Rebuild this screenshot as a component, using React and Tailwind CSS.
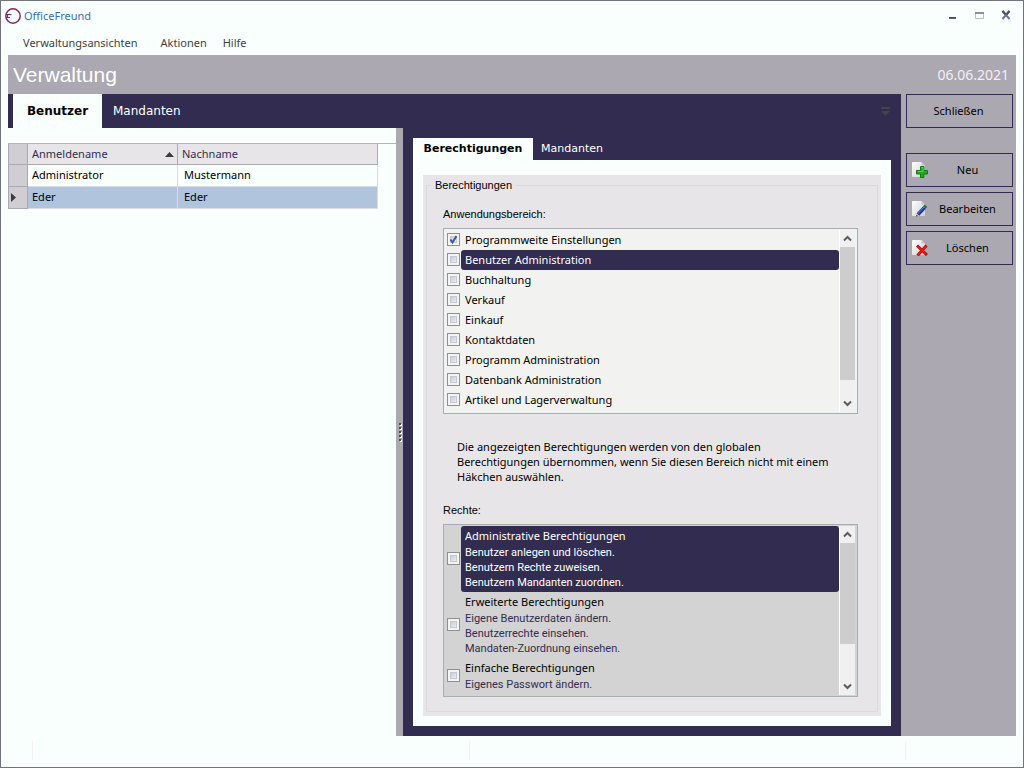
import { useState } from 'react'
import clsx from 'clsx'

const USERS = [
  { login: 'Administrator', lastName: 'Mustermann' },
  { login: 'Eder', lastName: 'Eder' },
]

const AREAS = [
  'Programmweite Einstellungen',
  'Benutzer Administration',
  'Buchhaltung',
  'Verkauf',
  'Einkauf',
  'Kontaktdaten',
  'Programm Administration',
  'Datenbank Administration',
  'Artikel und Lagerverwaltung',
]

const RIGHTS = [
  {
    title: 'Administrative Berechtigungen',
    lines: ['Benutzer anlegen und löschen.', 'Benutzern Rechte zuweisen.', 'Benutzern Mandanten zuordnen.'],
  },
  {
    title: 'Erweiterte Berechtigungen',
    lines: ['Eigene Benutzerdaten ändern.', 'Benutzerrechte einsehen.', 'Mandaten-Zuordnung einsehen.'],
  },
  { title: 'Einfache Berechtigungen', lines: ['Eigenes Passwort ändern.'] },
]

function Logo() {
  return (
    <svg width="16" height="16" viewBox="0 0 16 16" fill="none" stroke="#84286b" aria-hidden="true">
      <circle cx="8" cy="8" r="7.2" strokeWidth="1.5" />
      <path d="M1 6.5H6.5M1 9.5H5M2.5 6V10" strokeWidth="1.2" />
    </svg>
  )
}

function TitleBar() {
  return (
    <header className="flex h-[30px] items-center pl-1 pr-[9px]">
      <Logo />
      <h1 className="ml-[3px] flex-1 text-[11px] text-[#3a6fb5]">OfficeFreund</h1>
      <div className="flex items-center gap-[11px]">
        <button type="button" aria-label="Minimieren" className="h-4 w-4">
          <svg width="16" height="16" viewBox="0 0 16 16">
            <path d="M5 9h7v2H5z" fill="#5b6478" />
            <path d="M5 9h7v1H5z" fill="#474d5c" />
          </svg>
        </button>
        <button type="button" aria-label="Maximieren" className="h-4 w-4">
          <svg width="16" height="16" viewBox="0 0 16 16">
            <path d="M4.5 4.5h8v6h-8z" fill="none" stroke="#b9bfcc" />
            <path d="M4 4h9v2H4z" fill="#8d8f96" />
          </svg>
        </button>
        <button type="button" aria-label="Schließen" className="h-4 w-4">
          <svg width="16" height="16" viewBox="0 0 16 16" fill="none" strokeWidth="2">
            <path d="M4.5 3l7 8M11.5 3l-7 8" stroke="#6b7690" />
            <path d="M4.5 3l3 3.5M11.5 3l-3 3.5" stroke="#4b5161" />
          </svg>
        </button>
      </div>
    </header>
  )
}

function MenuBar() {
  return (
    <nav className="flex h-6 items-center pl-[22px] text-[11px] text-[#3f3f4a]">
      <button type="button">Verwaltungsansichten</button>
      <button type="button" className="ml-[23px]">Aktionen</button>
      <button type="button" className="ml-4">Hilfe</button>
    </nav>
  )
}

function CheckBox({ id, checked, onChange }) {
  return (
    <span className="relative mb-px block h-[13px] w-[13px] shrink-0">
      <input
        id={id}
        type="checkbox"
        checked={checked}
        onChange={onChange}
        className="peer block h-[13px] w-[13px] appearance-none border border-[#8e8f8f] bg-linear-to-br from-[#b4bccb] to-[#ffffff] shadow-[inset_0_0_0_2px_#f4f4f4,inset_0_0_0_3px_#c4c8d0]"
      />
      <svg
        className="pointer-events-none absolute inset-0 hidden peer-checked:block"
        width="13"
        height="13"
        viewBox="0 0 13 13"
        fill="none"
        stroke="#3b5a94"
        strokeWidth="2"
      >
        <path d="M3.5 6.5L5.5 9.5L9.5 3" />
      </svg>
    </span>
  )
}

function Chevron({ down }) {
  return (
    <svg width="9" height="7" viewBox="0 0 9 7" fill="none" stroke="#5c5c5c" strokeWidth="2" aria-hidden="true">
      <path d={down ? 'M1 1.5L4.5 5L8 1.5' : 'M1 5.5L4.5 2L8 5.5'} />
    </svg>
  )
}

function ScrollBar({ thumb }) {
  return (
    <div className="mr-0.5 flex w-4 shrink-0 flex-col border-l border-white bg-[#f0f0f0]">
      <button type="button" aria-label="Nach oben" className="flex h-[17px] items-center justify-center">
        <Chevron />
      </button>
      <div className={clsx('bg-[#cdcdcd]', thumb)} />
      <button type="button" aria-label="Nach unten" className="mt-auto flex h-[17px] items-center justify-center">
        <Chevron down />
      </button>
    </div>
  )
}

function UserTable() {
  const [selected, setSelected] = useState(1)

  return (
    <div className="mt-[15px] border-t border-[#b4b4b8]">
      <table className="w-[370px] table-fixed border-separate border-spacing-0 text-left text-[11px]">
        <colgroup>
          <col className="w-5" />
          <col className="w-[150px]" />
          <col className="w-[200px]" />
        </colgroup>
        <thead>
          <tr className="h-[21px] text-[#322d50]">
            <th className="border-b border-l border-r border-[#aaa8b2] bg-[#d0cdd3] p-0" />
            <th className="border-b border-r border-[#aaa8b2] bg-[#e8e5e9] p-0 pl-1 font-normal">
              <div className="flex items-center justify-between pr-[3px]">
                Anmeldename
                <svg width="9" height="5" viewBox="0 0 9 5" fill="#3c3c3c" aria-hidden="true">
                  <path d="M4.5 0L9 5H0z" />
                </svg>
              </div>
            </th>
            <th className="border-b border-r border-[#aaa8b2] bg-[#e8e5e9] p-0 pl-1 font-normal">Nachname</th>
          </tr>
        </thead>
        <tbody>
          {USERS.map((user, i) => (
            <tr
              key={user.login}
              onClick={() => setSelected(i)}
              className={clsx('h-[22px] text-black', i === selected && 'bg-[#b0c4de]')}
            >
              <td className="border-b border-l border-r border-[#aaa8b2] bg-[#d0cdd3] p-0 pl-0.5">
                {i === selected && (
                  <svg width="5" height="9" viewBox="0 0 5 9" fill="#3c3c3c" aria-hidden="true">
                    <path d="M0 0L5 4.5L0 9z" />
                  </svg>
                )}
              </td>
              <td className="border-b border-r border-[#dcdce6] p-0 pl-1">{user.login}</td>
              <td className="border-b border-r border-[#dcdce6] p-0 pl-1.5">{user.lastName}</td>
            </tr>
          ))}
        </tbody>
      </table>
    </div>
  )
}

function AreaList() {
  const [checked, setChecked] = useState([0])

  const toggle = (i) =>
    setChecked((prev) => (prev.includes(i) ? prev.filter((n) => n !== i) : [...prev, i]))

  return (
    <div className="flex h-[186px] border border-[#a5adb5] bg-[#f2f2f0] py-px">
      <ul className="min-w-0 flex-1 overflow-hidden">
        {AREAS.map((area, i) => (
          <li key={area} className="flex h-5 items-center pl-[3px]">
            <CheckBox id={`area-${i}`} checked={checked.includes(i)} onChange={() => toggle(i)} />
            <label
              htmlFor={`area-${i}`}
              className={clsx(
                'ml-px flex h-5 flex-1 items-center rounded-[3px] pl-1 text-[11px]',
                i === 1 ? 'bg-[#322d50] text-white' : 'text-black',
              )}
            >
              {area}
            </label>
          </li>
        ))}
      </ul>
      <ScrollBar thumb="h-[133px]" />
    </div>
  )
}

function RightsList() {
  const [checked, setChecked] = useState([])

  const toggle = (i) =>
    setChecked((prev) => (prev.includes(i) ? prev.filter((n) => n !== i) : [...prev, i]))

  return (
    <div className="flex h-[173px] border border-[#a5adb5] bg-[#d3d3d3] py-px">
      <ul className="min-w-0 flex-1 overflow-hidden">
        {RIGHTS.map((right, i) => (
          <li key={right.title} className="flex items-center pl-[3px]">
            <CheckBox id={`right-${i}`} checked={checked.includes(i)} onChange={() => toggle(i)} />
            <label
              htmlFor={`right-${i}`}
              className={clsx(
                'ml-px block flex-1 rounded-[3px] pb-0.5 pl-1 pt-px',
                i === 0 ? 'bg-[#322d50] text-white' : 'text-[#322d50]',
              )}
            >
              <span className={clsx('block text-[11px] leading-[18px]', i > 0 && 'text-black')}>
                {right.title}
              </span>
              {right.lines.map((line) => (
                <span key={line} className="block font-[Roboto,sans-serif] text-[11px] leading-[15px]">{line}</span>
              ))}
            </label>
          </li>
        ))}
      </ul>
      <ScrollBar thumb="h-[101px]" />
    </div>
  )
}

function PermissionsPane() {
  return (
    <section className="flex min-w-0 flex-1 flex-col px-2.5 pb-2.5 pt-2.5">
      <div role="tablist" className="flex h-[22px] font-['DejaVu_Sans',sans-serif] text-[11px]">
        <button type="button" role="tab" aria-selected="true" className="w-[120px] bg-[#f8fffd] font-bold text-black">
          Berechtigungen
        </button>
        <button type="button" role="tab" aria-selected="false" className="px-2 text-white">
          Mandanten
        </button>
      </div>
      <div className="flex-1 bg-[#f8fffd] px-2.5 pb-2.5 pt-[15px]">
        <div className="h-full bg-[#e8e5e9] px-[3px] pb-1">
          <fieldset className="h-full border border-[#dcdadf] pl-4 pr-[19px] text-[11px] text-black">
            <legend className="-ml-3 px-1 font-['Liberation_Sans',sans-serif] leading-[20px]">Berechtigungen</legend>
            <p className="mb-1 mt-[9px] font-['Liberation_Sans',sans-serif] leading-[20px]">Anwendungsbereich:</p>
            <AreaList />
            <p className="ml-3.5 mr-5 mt-[25px] leading-[15px]">
              Die angezeigten Berechtigungen werden von den globalen Berechtigungen übernommen, wenn Sie diesen
              Bereich nicht mit einem Häkchen auswählen.
            </p>
            <p className="mb-1 mt-4 font-['Liberation_Sans',sans-serif] leading-[20px]">Rechte:</p>
            <RightsList />
          </fieldset>
        </div>
      </div>
    </section>
  )
}

function Sheet({ children }) {
  return (
    <svg width="16" height="16" viewBox="0 0 16 16" aria-hidden="true">
      <defs>
        <linearGradient id="sheet" x1="0" y1="0" x2="1" y2="1">
          <stop offset="0" stopColor="#ffffff" />
          <stop offset="1" stopColor="#cfcfd4" />
        </linearGradient>
      </defs>
      <path d="M1 0h8.5L13 3.5V14q0 1-1 1H1q-1 0-1-1V1q0-1 1-1z" fill="url(#sheet)" />
      <path d="M9.5 0L13 3.5H9.5z" fill="#c4c4ca" />
      {children}
    </svg>
  )
}

const ACTIONS = [
  {
    label: 'Neu',
    icon: (
      <Sheet>
        <path d="M8.5 4.5h3.5v4h3.5V12H12v3.5H8.5V12h-4V8.5h4z" fill="#22a822" stroke="#0f7d12" />
        <path d="M9.5 5.5h1.5v4h-5" fill="none" stroke="#5fd05a" />
      </Sheet>
    ),
  },
  {
    label: 'Bearbeiten',
    icon: (
      <Sheet>
        <path d="M4 15.5l1-4 3 3z" fill="#e8c98a" />
        <path d="M4 15.5l0.5-1.8 1.3 1.3z" fill="#222" />
        <path d="M6 13.5L12.5 6.5" stroke="#1f3a94" strokeWidth="3.6" />
        <path d="M6 12.5L12 6" stroke="#5c7fd0" strokeWidth="1" />
        <path d="M12.3 6.6L14 4.8" stroke="#1d7a32" strokeWidth="3.6" />
      </Sheet>
    ),
  },
  {
    label: 'Löschen',
    icon: (
      <Sheet>
        <path d="M5 5.5l10 9.5M14.5 5.5L5.5 15.5" stroke="#b40808" strokeWidth="3" />
        <path d="M5.5 6l9 8.5M14 6l-8 9" stroke="#ea1c1c" strokeWidth="1.6" />
      </Sheet>
    ),
  },
]

function Sidebar() {
  return (
    <aside className="flex w-[115px] shrink-0 flex-col bg-[#aba8b2] pl-[5px] pr-[3px] text-[11px] text-black">
      <button type="button" className="h-[34px] border border-[#322d50] pr-0.5">Schließen</button>
      <div className="mt-[25px] flex flex-col gap-[5px]">
        {ACTIONS.map(({ label, icon }) => (
          <button key={label} type="button" className="flex h-[34px] items-center border border-[#322d50] px-[5px]">
            {icon}
            <span className="flex-1 text-center">{label}</span>
          </button>
        ))}
      </div>
    </aside>
  )
}

export default function App() {
  return (
    <div className="flex min-h-screen flex-col border border-[#74747e] bg-[#f8fffd] font-['Noto_Sans',sans-serif]">
      <TitleBar />
      <MenuBar />
      <main className="mx-[7px] flex flex-1 flex-col">
        <div className="flex h-[39px] items-center justify-between bg-[#aba8b2] px-[5px] text-white">
          <h2 className="font-['Liberation_Sans',sans-serif] text-[21px]">Verwaltung</h2>
          <time className="pr-0.5 text-[14px] text-[#f0f0f3]" dateTime="2021-06-06">06.06.2021</time>
        </div>
        <div className="flex flex-1">
          <div className="flex min-w-0 flex-1 flex-col bg-[#322d50]">
            <div role="tablist" className="flex h-[34px] items-center pl-[5px] pr-[11px] font-['DejaVu_Sans',sans-serif] text-[12px]">
              <button type="button" role="tab" aria-selected="true" className="h-full w-[89px] bg-[#f8fffd] font-bold text-black">
                Benutzer
              </button>
              <button type="button" role="tab" aria-selected="false" className="h-full px-[11px] text-white">
                Mandanten
              </button>
              <button type="button" aria-label="Weitere Ansichten" className="ml-auto">
                <svg width="9" height="9" viewBox="0 0 9 9" fill="#3f4549">
                  <path d="M0 0h9v2H0zM0 4h9L4.5 9z" />
                </svg>
              </button>
            </div>
            <div className="flex flex-1">
              <section className="w-[388px] shrink-0 bg-[#f8fffd]">
                <UserTable />
              </section>
              <div className="flex w-[7px] shrink-0 flex-col items-center justify-center gap-0.5 bg-[#aba8b2]">
                {[0, 1, 2, 3, 4].map((n) => (
                  <span key={n} className="h-0.5 w-0.5 bg-[#4a4a52] shadow-[1px_1px_0_#fff]" />
                ))}
              </div>
              <PermissionsPane />
            </div>
          </div>
          <Sidebar />
        </div>
      </main>
      <footer className="flex h-[31px] pl-[31px] pt-[5px]">
        <span className="h-[19px] flex-1 border-l border-[#f6f0f2]" />
        <span className="h-[19px] flex-1 border-l border-[#f6f0f2]" />
        <span className="h-[19px] w-[118px] border-l border-[#f6f0f2]" />
      </footer>
    </div>
  )
}
